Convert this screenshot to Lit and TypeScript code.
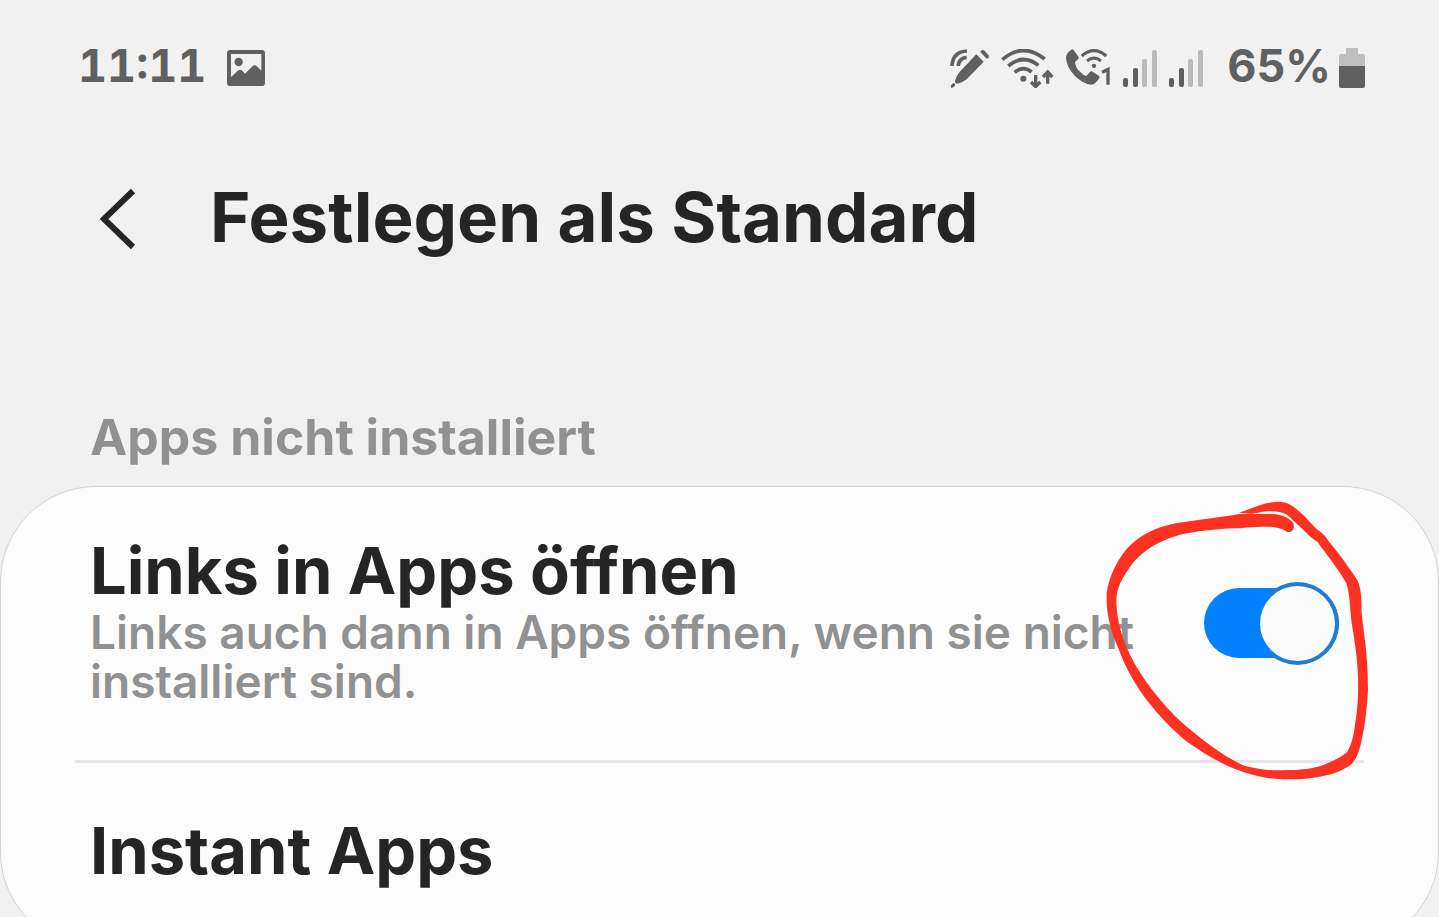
import { LitElement, html, css, svg } from "lit";
import { customElement, property, state } from "lit/decorators.js";

const signalBars = svg`
  <rect x="0" y="28" width="5" height="9" rx="2" fill="#606060"></rect>
  <rect x="10" y="18" width="5" height="19" rx="2" fill="#606060"></rect>
  <rect x="19" y="9" width="5" height="28" rx="2" fill="#bababa"></rect>
  <rect x="29" y="0" width="5" height="37" rx="2" fill="#bababa"></rect>`;

@customElement("status-bar")
export class StatusBar extends LitElement {
  static styles = css`
    :host {
      display: flex;
      align-items: center;
      height: 132px;
      padding: 0 74px 0 78px;
      color: #606060;
      font-size: 45px;
      font-weight: 700;
      line-height: 48px;
    }
    .time {
      margin-right: 21px;
      font-variant-numeric: tabular-nums;
    }
    .icons {
      display: flex;
      align-items: center;
      gap: 12px;
      margin-left: auto;
    }
    .level {
      margin: 0 8px 0 24px;
    }
    svg {
      display: block;
      flex: none;
      margin-top: 4px;
    }
  `;

  render() {
    return html`
      <time class="time">11:11</time>
      <svg width="38" height="36" viewBox="0 0 114 108" aria-hidden="true">
        <path fill="#606060" fill-rule="evenodd" d="M10 0H104Q114 0 114 10V98Q114 108 104 108H10Q0 108 0 98V10Q0 0 10 0ZM12 12V81L34 61Q39 57 44 61L54 71L77 48Q83 43 89 48L103 62V12Z"></path>
        <circle cx="35" cy="36" r="12.500" fill="#606060"></circle>
      </svg>
      <div class="icons">
        <svg width="39" height="39" viewBox="0 0 117 117" fill="none" aria-hidden="true">
          <path d="M6 51V48Q10 8 51 6M25 51V48Q28 27 50 25" stroke="#606060" stroke-width="11"></path>
          <path fill="#606060" d="M79 16L101 38L50 91Q38 101 23 104Q14 104 15 96Q18 82 28 70ZM95 4Q99 1 104 5L115 18Q119 23 114 28L110 29L91 9ZM10 102Q16 103 16 109Q11 117 5 117Q1 115 3 109Z"></path>
        </svg>
        <svg width="53" height="39" viewBox="0 0 159 117" fill="none" stroke="#606060" aria-hidden="true">
          <path d="M4 32Q66 -22 131 30M22 51Q66 13 112 49M41 70Q67 48 92 69" stroke-width="11"></path>
          <circle cx="67" cy="89" r="9" fill="#606060" stroke="none"></circle>
          <path d="M104 78V112M90 99L104 113L118 99M140 104V69M126 84L140 69L154 84" stroke-width="10"></path>
        </svg>
        <svg width="45" height="38" viewBox="0 0 135 114" aria-hidden="true">
          <path fill="#606060" d="M22 2L38 24Q39 28 36 31L27 39Q29 58 43 69Q53 80 61 81L71 70Q75 65 80 68L99 81Q103 84 98 90Q87 107 76 107Q52 105 26 80Q-1 50 0 24Q1 12 16 2Q20-1 22 2Z"></path>
          <path d="M47 21Q84-11 121 21M63 36Q84 19 105 36" fill="none" stroke="#606060" stroke-width="9"></path>
          <circle cx="84" cy="51" r="6.500" fill="#606060"></circle>
          <path d="M108 70L126 61V107" fill="none" stroke="#606060" stroke-width="10"></path>
        </svg>
        <svg width="34" height="37" viewBox="0 0 34 37" aria-hidden="true">${signalBars}</svg>
        <svg width="34" height="37" viewBox="0 0 34 37" aria-hidden="true">${signalBars}</svg>
      </div>
      <span class="level">65%</span>
      <svg width="26" height="40" viewBox="0 0 26 40" aria-hidden="true">
        <path fill="#bfbfbf" d="M7 0H19V6H24Q26 6 26 8V18H0V8Q0 6 2 6H7Z"></path>
        <path fill="#606060" d="M0 18H26V38Q26 40 24 40H2Q0 40 0 38Z"></path>
      </svg>
    `;
  }
}

@customElement("toggle-switch")
export class ToggleSwitch extends LitElement {
  static styles = css`
    :host {
      display: block;
      flex: none;
    }
    .switch {
      appearance: none;
      display: flex;
      align-items: center;
      width: 135px;
      height: 70px;
      margin: 0;
      border-radius: 35px;
      background: #b4b4b4;
      cursor: pointer;
    }
    .switch::before {
      content: "";
      flex: none;
      box-sizing: border-box;
      width: 83px;
      height: 83px;
      border: 4px solid #999999;
      border-radius: 50%;
      background: #fbfbfb;
    }
    .switch:checked {
      justify-content: flex-end;
      background: #0381fe;
    }
    .switch:checked::before {
      border-color: #217dd1;
      border-left-color: #0381fe;
    }
  `;

  @property({ type: Boolean }) checked = false;
  @property() label = "";

  render() {
    return html`<input class="switch" type="checkbox" role="switch" aria-label=${this.label} .checked=${this.checked} />`;
  }
}

@customElement("app-root")
export class AppRoot extends LitElement {
  static styles = css`
    :host {
      display: block;
      height: 100vh;
      overflow: hidden;
      background: #f1f1f1;
      color: #252525;
      font-family: Inter, Roboto, sans-serif;
    }
    .header {
      display: flex;
      align-items: center;
      gap: 74px;
      padding: 43px 98px 0;
    }
    .back {
      display: block;
      padding: 0;
      border: 0;
      background: none;
      color: inherit;
      cursor: pointer;
    }
    .back svg {
      display: block;
    }
    h1,
    h2,
    h3,
    p {
      margin: 0;
    }
    h1 {
      padding-bottom: 4px;
      font-size: 69px;
      font-weight: 700;
      line-height: 84px;
    }
    h2 {
      padding: 141px 90px 16px;
      color: #919191;
      font-size: 50px;
      font-weight: 700;
      line-height: 66px;
    }
    h3 {
      font-size: 65px;
      font-weight: 700;
      line-height: 74px;
    }
    p {
      color: #919191;
      font-size: 46px;
      font-weight: 600;
      line-height: 49px;
    }
    .card {
      border: 1px solid #d2d2d2;
      border-radius: 96px;
      background: #fcfcfc;
    }
    .row {
      position: relative;
      display: flex;
      align-items: center;
      gap: 40px;
      padding: 47px 99px 48px 89px;
    }
    .row.simple {
      padding-top: 51px;
      padding-bottom: 59px;
    }
    .text {
      flex: 1;
      padding-bottom: 6px;
    }
    .divider {
      height: 3px;
      margin: 0 74px;
      border: 0;
      background: #e5e5e5;
    }
    .marker {
      position: absolute;
      z-index: 1;
      top: 3px;
      right: 0;
      pointer-events: none;
    }
  `;

  @state() private linksInApps = true;

  render() {
    return html`
      <status-bar></status-bar>
      <header class="header">
        <button class="back" aria-label="Zurück">
          <svg width="38" height="62" viewBox="0 0 38 62" fill="none" stroke="#252525" stroke-width="6">
            <path d="M35 3L6 31L35 59"></path>
          </svg>
        </button>
        <h1>Festlegen als Standard</h1>
      </header>
      <main>
        <h2>Apps nicht installiert</h2>
        <section class="card">
          <div class="row">
            <div class="text">
              <h3>Links in Apps öffnen</h3>
              <p>Links auch dann in Apps öffnen, wenn sie nicht installiert sind.</p>
            </div>
            <toggle-switch label="Links in Apps öffnen" .checked=${this.linksInApps}></toggle-switch>
            <svg class="marker" width="349" height="310" viewBox="0 0 1047 930" aria-hidden="true">
              <path
                fill="#fc3122"
                d="M450 68C490 55 525 35 570 35C600 36 615 50 645 77L680 115C690 123 705 130 720 155C750 190 785 240 805 270C815 295 818 310 818 370C825 440 837 490 837 600C833 660 828 710 818 750C810 790 800 810 785 825C750 847 720 855 715 855C670 866 640 868 600 868C540 868 500 860 440 838C390 818 340 788 290 752C210 685 130 590 90 480C60 410 52 370 53 310C60 260 80 220 110 180C150 135 200 112 260 100C330 88 400 82 450 72L550 72C580 73 600 85 612 98C620 115 610 128 595 126C580 115 560 110 540 110C480 110 450 115 440 115C380 117 320 124 270 135C200 155 150 190 120 235C90 280 82 300 82 340C85 400 100 440 110 465C140 540 200 620 260 680C330 745 400 795 460 825C520 843 560 841 600 840C650 840 690 832 710 822C750 805 765 795 775 785C790 760 795 730 800 690C808 640 808 600 807 560C805 500 795 440 788 400C782 340 782 310 772 280C740 225 710 190 685 155C660 140 650 125 640 117L595 75C580 65 560 62 530 64L490 71Z"
              ></path>
            </svg>
          </div>
          <hr class="divider" />
          <div class="row simple">
            <h3>Instant Apps</h3>
          </div>
        </section>
      </main>
    `;
  }
}
